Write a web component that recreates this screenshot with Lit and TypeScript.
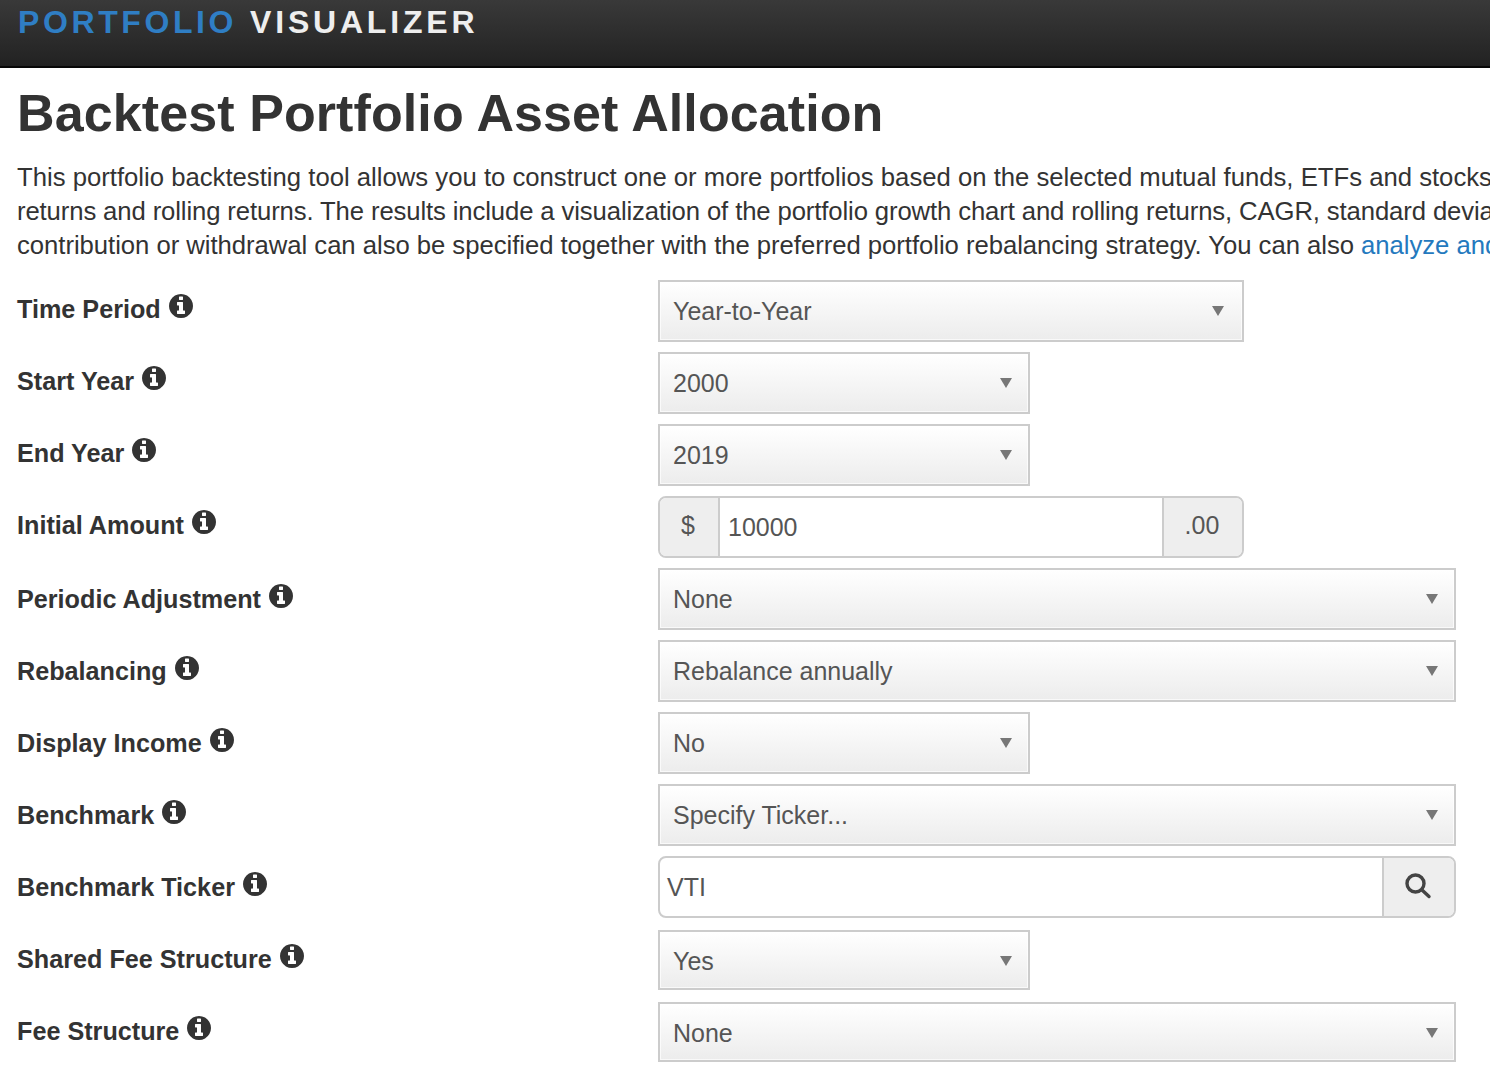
import { LitElement, html, css, svg } from "lit";
import { customElement } from "lit/decorators.js";

const INFO = svg`<path d="M1024 1376v-160q0-14-9-23t-23-9h-96v-512q0-14-9-23t-23-9h-320q-14 0-23 9t-9 23v160q0 14 9 23t23 9h96v320h-96q-14 0-23 9t-9 23v160q0 14 9 23t23 9h448q14 0 23-9t9-23zm-128-896v-160q0-14-9-23t-23-9h-192q-14 0-23 9t-9 23v160q0 14 9 23t23 9h192q14 0 23-9t9-23zm640 416q0 209-103 385.5t-279.5 279.5-385.5 103-385.5-103-279.5-279.5-103-385.5 103-385.5 279.5-279.5 385.5-103 385.5 103 279.5 279.5 103 385.5z"/>`;

type Row = { label: string; kind: "select" | "amount" | "ticker"; value: string; size?: "s" | "m" | "l"; short?: boolean };

const ROWS: Row[] = [
  { label: "Time Period", kind: "select", value: "Year-to-Year", size: "m" },
  { label: "Start Year", kind: "select", value: "2000", size: "s" },
  { label: "End Year", kind: "select", value: "2019", size: "s" },
  { label: "Initial Amount", kind: "amount", value: "10000" },
  { label: "Periodic Adjustment", kind: "select", value: "None", size: "l" },
  { label: "Rebalancing", kind: "select", value: "Rebalance annually", size: "l" },
  { label: "Display Income", kind: "select", value: "No", size: "s" },
  { label: "Benchmark", kind: "select", value: "Specify Ticker...", size: "l" },
  { label: "Benchmark Ticker", kind: "ticker", value: "VTI" },
  { label: "Shared Fee Structure", kind: "select", value: "Yes", size: "s", short: true },
  { label: "Fee Structure", kind: "select", value: "None", size: "l", short: true },
];

@customElement("app-root")
export class AppRoot extends LitElement {
  static styles = css`
    :host {
      display: block;
      width: 1490px;
      height: 1070px;
      overflow: hidden;
      background: #fff;
      color: #333;
      font-family: "Liberation Sans", Arial, sans-serif;
    }
    .nav {
      height: 66px;
      border-bottom: 2px solid #080808;
      background: linear-gradient(to bottom, #393939 0%, #222 100%);
      padding-left: 18px;
      font-size: 32px;
      line-height: 44px;
      font-weight: 700;
      letter-spacing: 3.8px;
      white-space: nowrap;
      color: #eee;
    }
    .nav b { color: #2f7ec4; margin-right: 13px; letter-spacing: 3.6px; }
    h1 {
      margin: 0;
      padding: 15px 0 0 17px;
      height: 76px;
      font-size: 52px;
      line-height: 60px;
      font-weight: 700;
      color: #333;
      white-space: nowrap;
      letter-spacing: 0.1px;
    }
    .intro {
      padding: 1px 0 0 17px;
      height: 121px;
      box-sizing: border-box;
      font-size: 25.7px;
      line-height: 34px;
      white-space: nowrap;
      overflow: hidden;
    }
    .intro .second { letter-spacing: -0.12px; }
    .intro .third { letter-spacing: -0.04px; }
    .intro a { color: #2479be; text-decoration: none; }
    .form { display: flex; flex-direction: column; gap: 10px; padding-left: 17px; }
    .row { display: flex; align-items: flex-start; height: 62px; }
    .label {
      width: 641px;
      flex: none;
      padding-top: 14px;
      font-size: 25.2px;
      line-height: 30px;
      font-weight: 700;
      white-space: nowrap;
      display: flex;
      align-items: flex-start;
      gap: 8px;
      color: #333;
    }
    .label.low { padding-top: 16px; }
    .info { width: 24px; height: 24px; fill: #333; flex: none; }
    .control { font-size: 25px; color: #555; box-sizing: border-box; height: 62px; }
    .control.short { height: 60px; align-self: flex-end; padding-top: 2px; }
    .select {
      display: flex;
      align-items: center;
      justify-content: space-between;
      padding: 0 16px 0 13px;
      border: 2px solid #ccc;
      background: linear-gradient(to bottom, #fff 0%, #ececec 100%);
      box-shadow: inset 0 0 0 1px rgba(255, 255, 255, 0.7);
    }
    .s { width: 372px; }
    .m { width: 586px; }
    .l { width: 798px; }
    .select.m { padding-right: 18px; }
    .caret {
      width: 0;
      height: 0;
      border-left: 6.5px solid transparent;
      border-right: 6.5px solid transparent;
      border-top: 10px solid #777;
    }
    .group {
      display: flex;
      border: 2px solid #ccc;
      border-radius: 8px;
      overflow: hidden;
      background: #fff;
    }
    .addon {
      background: #eee;
      display: flex;
      align-items: center;
      justify-content: center;
      flex: none;
      box-sizing: border-box;
    }
    .addon.left { width: 60px; border-right: 2px solid #ccc; padding: 0 2px 4px 0; }
    .addon.right { width: 80px; border-left: 2px solid #ccc; padding: 0 2px 3px 0; }
    .addon.search { width: 72px; border-left: 2px solid #ccc; }
    .field { flex: 1; display: flex; align-items: center; }
    .amount .field { padding-left: 8px; }
    .ticker .field { padding-left: 7px; }
    .search svg { width: 28px; height: 28px; margin: -3px 2px 0 0; fill: none; stroke: #444; stroke-width: 3.4; stroke-linecap: round; }
  `;

  private renderControl(r: Row) {
    if (r.kind === "select") {
      return html`<div class="control select ${r.size} ${r.short ? "short" : ""}"><span>${r.value}</span><i class="caret"></i></div>`;
    }
    if (r.kind === "amount") {
      return html`<div class="control group amount m">
        <div class="addon left">$</div>
        <div class="field">${r.value}</div>
        <div class="addon right">.00</div>
      </div>`;
    }
    return html`<div class="control group ticker l">
      <div class="field">${r.value}</div>
      <div class="addon search">
        <svg viewBox="0 0 28 28"><circle cx="11.5" cy="11.5" r="8.5"></circle><path d="M18 18l7 6.5"></path></svg>
      </div>
    </div>`;
  }

  render() {
    return html`
      <div class="nav"><b>PORTFOLIO</b>VISUALIZER</div>
      <h1>Backtest Portfolio Asset Allocation</h1>
      <div class="intro">
        <div>This portfolio backtesting tool allows you to construct one or more portfolios based on the selected mutual funds, ETFs and stocks</div>
        <div class="second">returns and rolling returns. The results include a visualization of the portfolio growth chart and rolling returns, CAGR, standard deviation</div>
        <div class="third">contribution or withdrawal can also be specified together with the preferred portfolio rebalancing strategy. You can also <a href="#">analyze and</a></div>
      </div>
      <div class="form">
        ${ROWS.map(
          (r, i) => html`<div class="row">
            <div class="label ${i >= 4 ? "low" : ""}">${r.label}<svg class="info" viewBox="0 128 1536 1536">${INFO}</svg></div>
            ${this.renderControl(r)}
          </div>`
        )}
      </div>
    `;
  }
}
